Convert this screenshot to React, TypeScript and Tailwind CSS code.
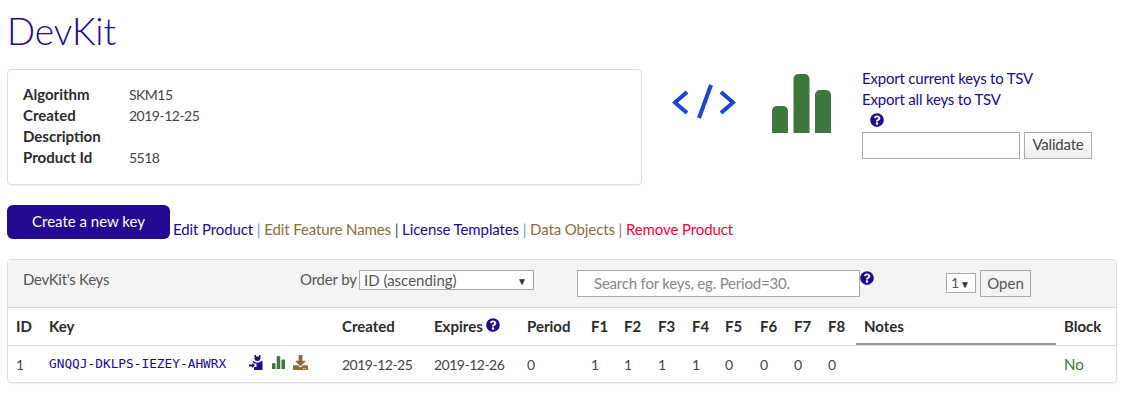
import React from "react";
import { FaDownload, FaQuestionCircle } from "react-icons/fa";

const ink = "text-[#22098f]";

const headers = [
  { label: "Created", w: "w-[92px]" },
  { label: "Expires", w: "w-[93px]", help: true },
  { label: "Period", w: "w-[64px]" },
  { label: "F1", w: "w-[33px]" },
  { label: "F2", w: "w-[34px]" },
  { label: "F3", w: "w-[34px]" },
  { label: "F4", w: "w-[33px]" },
  { label: "F5", w: "w-[35px]" },
  { label: "F6", w: "w-[34px]" },
  { label: "F7", w: "w-[34px]" },
  { label: "F8", w: "w-[28px]" },
];

const cells = ["2019-12-25", "2019-12-26", "0", "1", "1", "1", "1", "0", "0", "0", "0"];

function Bars({ className }: { className: string }) {
  return (
    <svg viewBox="0 0 59 59" className={className} fill="#3d773d">
      <path d="M0 59V37a5 5 0 0 1 5-5h6a5 5 0 0 1 5 5v22zM21.500 59V5a5 5 0 0 1 5-5h6a5 5 0 0 1 5 5v54zM43 59V21a5 5 0 0 1 5-5h6a5 5 0 0 1 5 5v38z" />
    </svg>
  );
}

function CodeIcon() {
  return (
    <svg viewBox="0 0 64 35" className="h-[35px] w-[64px]" fill="none" stroke="#1c44d8" strokeWidth="4">
      <path d="M15 8 3 18.500 15 29" />
      <path d="M39 1 27 34" />
      <path d="M49 8 61 18.500 49 29" />
    </svg>
  );
}

function KeyUserIcon() {
  return (
    <svg viewBox="0 0 14 15" className="h-[15px] w-[14px]" fill="#22098f">
      <path d="M5.500 0H7V1.500H10V0H11.500V3.500A2.800 2.800 0 0 1 8.500 6 2.800 2.800 0 0 1 5.500 3.500z" />
      <path d="M3.500 5.500 7 7.500H10L13.500 5.500V15H5V12H7.500V8.500H4.500z" />
      <path d="M0 9.500H3V8L6 10.500 3 13V11.500H0z" />
    </svg>
  );
}

export default function App() {
  return (
    <div className="h-[406px] w-[1124px] overflow-hidden bg-white px-[7px] font-['Lato','Open_Sans',sans-serif] text-[15px] text-[#444]">
      <h1 className={`pt-2 pb-[2px] text-[37px] font-light leading-[46px] ${ink}`}>DevKit</h1>

      <div className="mt-[13px] flex h-[116px]">
        <div className="flex w-[635px] flex-col justify-center rounded border border-[#ddd] pb-[3px] pl-[15px] shadow-[0_1px_1px_rgba(0,0,0,0.05)]">
          {[
            ["Algorithm", "SKM15"],
            ["Created", "2019-12-25"],
            ["Description", ""],
            ["Product Id", "5518"],
          ].map(([label, value]) => (
            <div key={label} className="flex h-[21px] items-center">
              <span className="w-[106px] font-bold text-[#2b2b2b]">{label}</span>
              <span className="text-[14px] tracking-[-0.5px]">{value}</span>
            </div>
          ))}
        </div>

        <div className="ml-[30px] mt-[15px] self-start">
          <CodeIcon />
        </div>
        <div className="ml-9 mt-[5px] self-start">
          <Bars className="h-[59px] w-[59px]" />
        </div>

        <div className={`ml-[31px] tracking-[-0.2px] ${ink}`}>
          <div className="mt-[-1px] h-[21px] leading-[21px]">Export current keys to TSV</div>
          <div className="h-[21px] leading-[21px]">Export all keys to TSV</div>
          <div className="mt-[2px] flex h-[15px] items-center pl-[8px] text-[14px]">
            <FaQuestionCircle />
          </div>
          <div className="mt-[5px] flex gap-[4px]">
            <input className="h-[27px] w-[158px] border border-[#aaa] bg-white" />
            <button className="h-[27px] w-[68px] border border-[#aaa] bg-gradient-to-b from-white to-[#eee] pb-[3px] text-[15px] text-[#444]">
              Validate
            </button>
          </div>
        </div>
      </div>

      <div className="mt-5 flex h-[34px] items-end">
        <button className="h-[34px] w-[163px] rounded-md bg-[#22098f] pb-[2px] text-white">Create a new key</button>
        <div className="ml-[3px] translate-y-[1px] tracking-[-0.11px] text-[#8a6d3b]">
          <span className={ink}>Edit Product</span>
          <span className="text-[#5b9bd5]"> | </span>
          <span>Edit Feature Names</span>
          <span className="text-[#444]"> | </span>
          <span className={ink}>License Templates</span>
          <span className="text-[#5b9bd5]"> | </span>
          <span>Data Objects</span>
          <span className="text-[#8a6d8b]"> | </span>
          <span className="text-[#ff0033]">Remove Product</span>
        </div>
      </div>

      <div className="mt-[20px] w-[1110px] rounded border border-[#ddd] shadow-[0_1px_1px_rgba(0,0,0,0.05)]">
        <div className="flex h-[48px] items-start border-b border-[#ddd] bg-[#f4f4f4] pl-[15px] text-[#555]">
          <span className="mt-2 w-[277px] tracking-[-0.3px]">DevKit's Keys</span>
          <span className="mt-2 w-[59px] tracking-[-0.2px]">Order by</span>
          <div className="relative mt-[10px] h-[20px] w-[175px] border border-[#aaa] bg-white pl-[4px] text-[15px] leading-[18px]">
            ID (ascending)
            <span className="absolute right-[6px] top-[1px] text-[10px] text-[#333]">▼</span>
          </div>
          <div className="ml-[43px] mt-[10px] flex h-[27px] w-[283px] items-center border border-[#aaa] bg-white pl-4 tracking-[-0.2px] text-[#888]">
            Search for keys, eg. Period=30.
          </div>
          <FaQuestionCircle className={`mt-[11px] text-[14px] ${ink}`} />
          <div className="relative ml-[72px] mt-[13px] h-[20px] w-[30px] border border-[#aaa] bg-white pl-[4px] text-[14px] leading-[18px]">
            1<span className="absolute right-[5px] top-[1px] text-[10px] text-[#333]">▼</span>
          </div>
          <button className="ml-[4px] mt-[10px] h-[27px] w-[51px] border border-[#aaa] bg-[#f4f4f4] text-[#555]">Open</button>
        </div>

        <div className="flex h-[38px] items-stretch border-b border-[#ddd] font-bold text-[#2b2b2b]">
          <div className="w-[41px] pl-[8px] pt-[7px]">ID</div>
          <div className="w-[293px] pt-[7px]">Key</div>
          {headers.map((h) => (
            <div key={h.label} className={`flex gap-[3px] pt-[7px] ${h.w}`}>
              {h.label}
              {h.help && <FaQuestionCircle className={`mt-[3px] text-[14px] ${ink}`} />}
            </div>
          ))}
          <div className="w-[200px] border-b-2 border-[#999] pl-[8px] pt-[7px]">Notes</div>
          <div className="pl-[8px] pt-[7px]">Block</div>
        </div>

        <div className="flex h-[36px] items-center text-[14px]">
          <div className="w-[41px] pl-[8px]">1</div>
          <div className={`w-[200px] font-['DejaVu_Sans_Mono',monospace] text-[12.800px] ${ink}`}>GNQQJ-DKLPS-IEZEY-AHWRX</div>
          <div className="flex w-[93px] items-center pb-[4px]">
            <KeyUserIcon />
            <Bars className="ml-[9px] h-[13px] w-[13px]" />
            <FaDownload className="ml-[8px] text-[15px] text-[#8a6d3b]" />
          </div>
          {cells.map((c, i) => (
            <div key={i} className={`${headers[i].w} ${i < 2 ? "tracking-[-0.5px]" : ""}`}>
              {c}
            </div>
          ))}
          <div className="w-[200px]" />
          <div className="pl-[8px] text-[15px] text-[#3c763d]">No</div>
        </div>
      </div>
    </div>
  );
}
